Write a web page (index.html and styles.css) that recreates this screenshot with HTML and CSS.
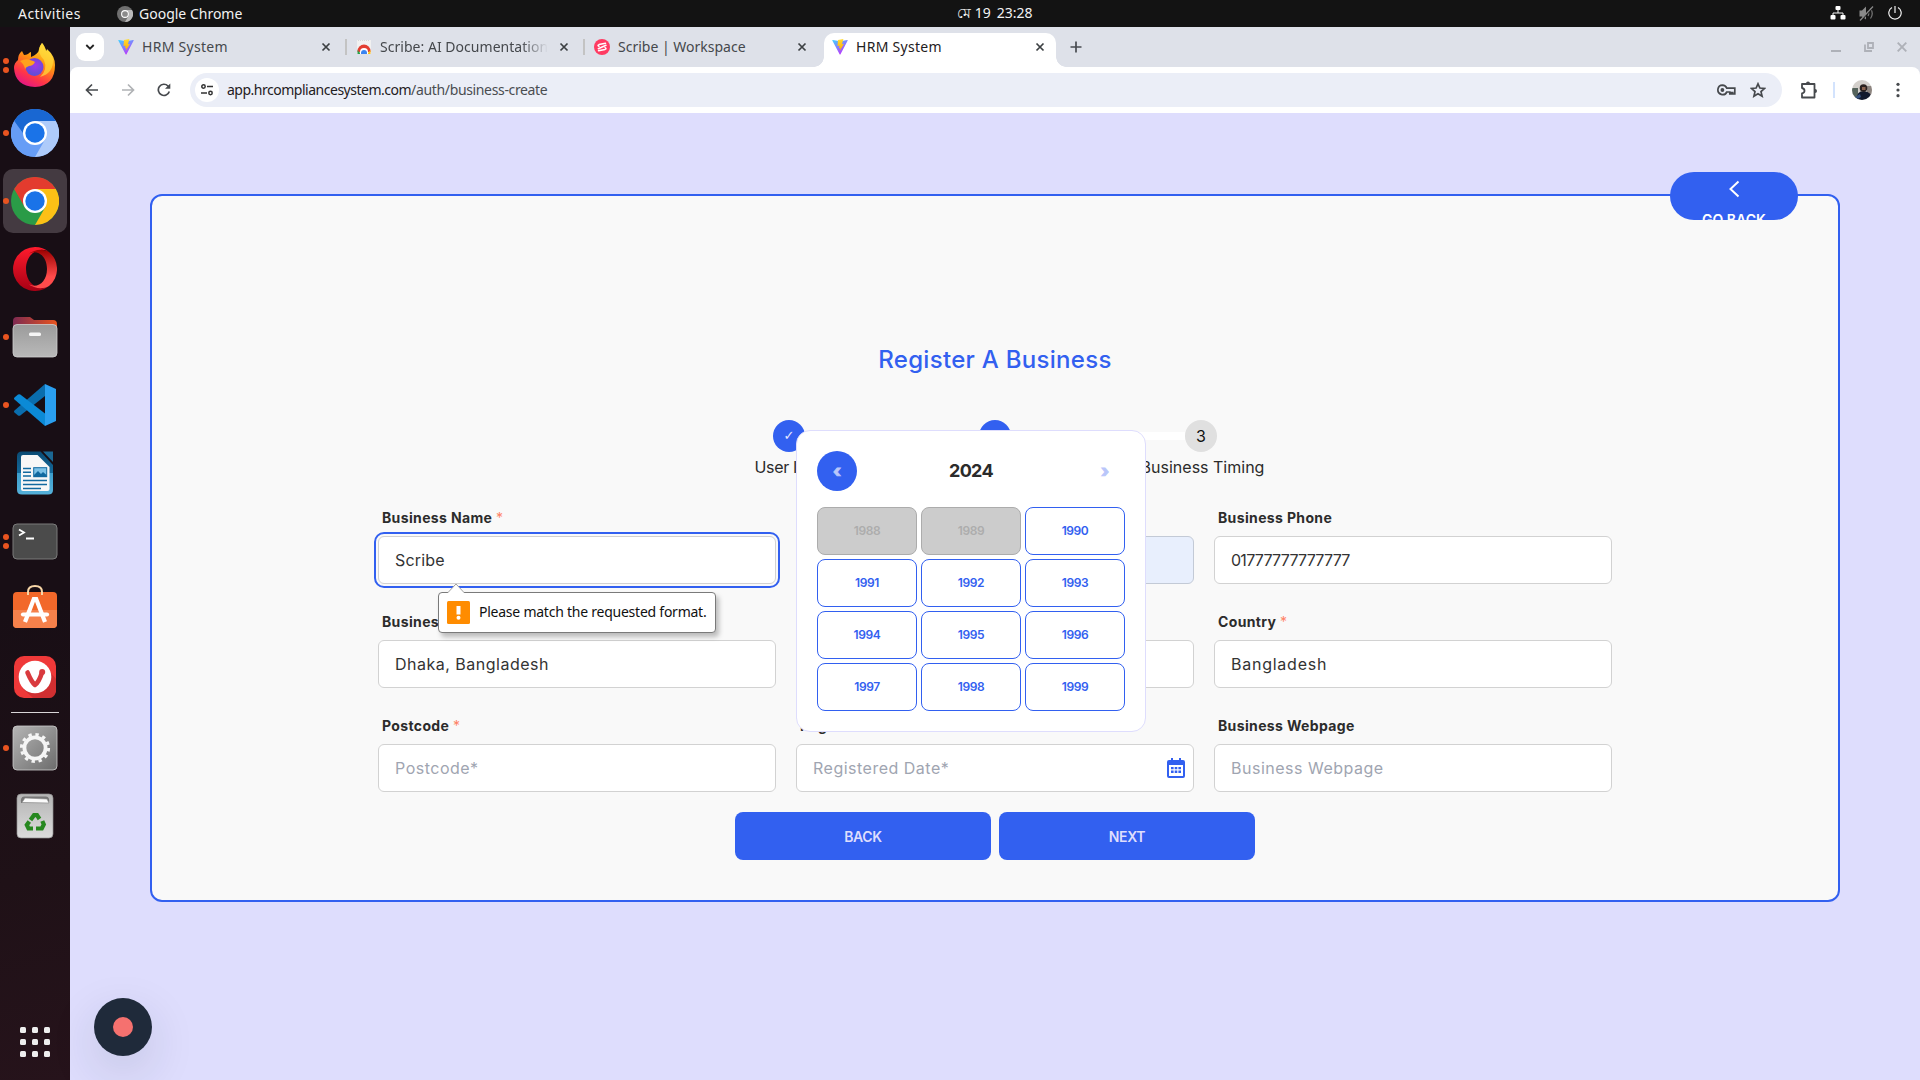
FILE: index.html
```html
<!DOCTYPE html>
<html lang="en">
<head>
<meta charset="utf-8">
<title>HRM System</title>
<link rel="stylesheet" href="styles.css">
</head>
<body>
<svg class="defs" width="0" height="0" aria-hidden="true">
  <defs>
    <linearGradient id="viteA" x1="0" y1="0" x2=".6" y2="1"><stop offset="0" stop-color="#41d1ff"/><stop offset="1" stop-color="#bd34fe"/></linearGradient>
    <linearGradient id="viteB" x1="0" y1="0" x2="0" y2="1"><stop offset="0" stop-color="#ffdd35"/><stop offset="1" stop-color="#ffa800"/></linearGradient>
    <symbol id="vite" viewBox="0 0 16 16"><path d="M.3 1.6 7.6 15.3q.4.7.9 0L15.7 1.6q.2-.6-.5-.5L8 2.3.9 1.1Q.1 1 .3 1.6z" fill="url(#viteA)"/><path d="M11.4 0 6 1.1l-.5 6 2-.3-.5 2.5 1.4-.4-.6 3.1L12 4.8l-2.1.4z" fill="url(#viteB)"/></symbol>
    <symbol id="x" viewBox="0 0 10 10"><path d="M1.500 1.500l7 7M8.500 1.500l-7 7" stroke="currentColor" stroke-width="1.700" fill="none"/></symbol>
    <linearGradient id="ffBody" x1=".8" y1="0" x2=".3" y2="1"><stop offset="0" stop-color="#fff44f"/><stop offset=".4" stop-color="#ff980e"/><stop offset=".75" stop-color="#ff3647"/><stop offset="1" stop-color="#e31587"/></linearGradient>
    <radialGradient id="ffGlobe" cx=".55" cy=".4" r=".6"><stop offset="0" stop-color="#a238e6"/><stop offset="1" stop-color="#5b4fd8"/></radialGradient>
    <linearGradient id="opA" x1="0" y1="0" x2="0" y2="1"><stop offset="0" stop-color="#ff1b2d"/><stop offset="1" stop-color="#a70014"/></linearGradient>
    <linearGradient id="opB" x1="0" y1="0" x2="0" y2="1"><stop offset="0" stop-color="#9c0000"/><stop offset=".7" stop-color="#ff4b4b"/></linearGradient>
    <linearGradient id="fold" x1="0" y1="0" x2="1" y2="0"><stop offset="0" stop-color="#7d2a51"/><stop offset="1" stop-color="#e9541f"/></linearGradient>
    <linearGradient id="gray" x1="0" y1="0" x2="0" y2="1"><stop offset="0" stop-color="#9b9b9b"/><stop offset="1" stop-color="#b9b9b9"/></linearGradient>
    <linearGradient id="set" x1="0" y1="0" x2="1" y2="1"><stop offset="0" stop-color="#b5b5b5"/><stop offset="1" stop-color="#6c6c6c"/></linearGradient>
    <linearGradient id="bin" x1="0" y1="0" x2="0" y2="1"><stop offset="0" stop-color="#b4b4b4"/><stop offset="1" stop-color="#dcdcdc"/></linearGradient>
    <linearGradient id="wr" x1="0" y1="0" x2="0" y2="1"><stop offset="0" stop-color="#0a4a73"/><stop offset=".5" stop-color="#14699b"/><stop offset=".5" stop-color="#3c9dcc"/><stop offset="1" stop-color="#55b1da"/></linearGradient>
  </defs>
</svg>
<div class="desktop">
  <header class="topbar">
    <span class="activities">Activities</span>
    <span class="app-name"><svg width="16" height="16" viewBox="0 0 16 16"><circle cx="8" cy="8" r="8" fill="#6f6f6f"/><path d="M8 16a8 8 0 0 0 7-12H8a4 4 0 0 1 3.500 6z" fill="#b9b9b9"/><circle cx="8" cy="8" r="3.400" fill="#8b8b8b" stroke="#fff" stroke-width="1.100"/></svg>Google Chrome</span>
    <span class="clock"><span>মে 19</span><span>23:28</span></span>
    <span class="tray">
      <svg width="16" height="14" viewBox="0 0 16 14"><path d="M8 3v4M3 10V7h10v3" stroke="#f5f5f5" fill="none"/><rect x="5.500" y="0" width="5" height="4" rx="1" fill="#fff"/><rect x=".5" y="9" width="5" height="4.500" rx="1" fill="#fff"/><rect x="10.500" y="9" width="5" height="4.500" rx="1" fill="#fff"/></svg>
      <svg width="15" height="15" viewBox="0 0 15 15"><path d="M.5 4.500H3l4-4v13L3 10.500H.5z" fill="#8a8a8a"/><path d="M9 5q1.500 2.500 0 5M11.500 2.500q3.500 5 0 10" stroke="#777" stroke-width="1.200" fill="none"/><path d="M1.500 15 14.500 1" stroke="#131313" stroke-width="1.500"/><path d="M1 14.500 14 .5" stroke="#8a8a8a" stroke-width="1.200"/></svg>
      <svg width="14" height="14" viewBox="0 0 14 14"><path d="M4 1.500a6.200 6.200 0 1 0 6 0M7 0v7" stroke="#f0f0f0" stroke-width="1.200" fill="none"/></svg>
    </span>
  </header>
  <div class="workspace">
    <nav class="dock">
      <div class="slot two"><svg width="42" height="44" viewBox="0 0 42 44"><path d="M4 17q0-6 4-9l2 4q2 0 4-1 2-2 3-2v5q7-3 8-7 1-5 3-7 2 2 4 8 1-1 1-2 8 7 8 16 0 21-20 22Q1 43 0 25q0-5 4-8z" fill="url(#ffBody)"/><path d="M28 0q-4 5-3 9 2 5 5 8 4 10-4 17 14-4 13-18Q37 9 33 7l0 3Q31 3 28 0z" fill="#ffd83a" opacity=".75"/><circle cx="20.500" cy="24" r="9" fill="url(#ffGlobe)"/><path d="M6 18q6-3 10-1 4 1 5 2-2 4-6 4-3 1-4 3-1-5-5-8z" fill="#ffa11c"/></svg></div>
      <div class="slot one"><svg width="48" height="48" viewBox="0 0 48 48"><circle cx="24" cy="24" r="24" fill="#669df6"/><path d="M3.200 12A24 24 0 0 1 44.800 12H24L12 24z" fill="#1967d2"/><path d="M3.200 12 13.600 30 24 36 34.400 30 24 48A24 24 0 0 1 3.200 12z" fill="#669df6"/><path d="M24 12H44.800A24 24 0 0 1 24 48L34.400 30z" fill="#aecbfa"/><circle cx="24" cy="24" r="12" fill="#fff"/><circle cx="24" cy="24" r="9.700" fill="#1a73e8"/></svg></div>
      <div class="slot one"><div class="active"><svg width="48" height="48" viewBox="0 0 48 48"><circle cx="24" cy="24" r="24" fill="#2a9b47"/><path d="M3.200 12A24 24 0 0 1 44.800 12H24L13.600 30z" fill="#e33b2e"/><path d="M24 12H44.800A24 24 0 0 1 24 48L34.400 30z" fill="#fcc016"/><circle cx="24" cy="24" r="12" fill="#fff"/><circle cx="24" cy="24" r="9.700" fill="#1a73e8"/></svg></div></div>
      <div class="slot"><svg width="44" height="44" viewBox="0 0 44 44"><path d="M22 0a22 22 0 1 0 14 39c-9 6-23-1-23-17S27-1 36 5A22 22 0 0 0 22 0z" fill="url(#opA)"/><path d="M14 8c9-7 20 0 20 14S23 43 14 36c9 7 17 6 22 3a22 22 0 0 0 0-34c-5-3-13-4-22 3z" fill="url(#opB)"/></svg></div>
      <div class="slot one"><svg width="46" height="42" viewBox="0 0 46 42"><path d="M1 5q0-4 4-4h13l4 3h19q4 0 4 4v20H1z" fill="url(#fold)"/><rect x="1" y="8.500" width="44" height="32.500" rx="4" fill="url(#gray)" stroke="#cfcfcf" stroke-width=".8"/><rect x="17" y="16.500" width="12" height="3.500" rx="1.500" fill="#f5f5f5"/></svg></div>
      <div class="slot one"><svg width="42" height="42" viewBox="0 0 42 42"><path d="M31 0 42 5v32l-11 5z" fill="#2a9ff0"/><path d="M31 0v12L6.300 31.500q-1.200.7-2.300 0L.5 28.500q-1-1 0-2z" fill="#0a6dad"/><path d="M31 42 .5 15.500q-1-1 0-2L4 10.500q1.200-.7 2.300 0L31 29.500z" fill="#0b8ad6"/></svg></div>
      <div class="slot"><svg width="36" height="44" viewBox="0 0 36 44"><path d="M5 .5h18.500L36 14v25q0 4.500-5 4.500H5Q0 43.500 0 39V5Q0 .5 5 .5z" fill="url(#wr)"/><path d="M26 .5h10V11z" fill="#1b6793"/><path d="M6 4h14.500L32.500 16v22q0 2-2 2H6q-2 0-2-2V6q0-2 2-2z" fill="#f7f7f7"/><path d="M6 17.500h8M6 21.300h8M6 25h8M6 29.500h24M6 33.500h24M6 37.500h18" stroke="#11699f" stroke-width="1.600"/><rect x="16.700" y="16.700" width="13" height="9" fill="#7cc1e6" stroke="#11699f"/><path d="M17 26v-2l4-4 3 3 2-2 3.500 3v2z" fill="#11699f"/></svg></div>
      <div class="slot two"><svg width="46" height="37" viewBox="0 0 46 37"><rect x="1" y="1" width="44" height="35" rx="4" fill="#4b4b4b" stroke="#7b7b7b"/><path d="M7 6.500l5 3-5 3M14 15.500h8" stroke="#fff" stroke-width="1.800" fill="none"/></svg></div>
      <div class="slot store"><svg width="46" height="44" viewBox="0 0 46 44"><rect x="1" y="7" width="44" height="36" rx="4" fill="#f2682a"/><path d="M1 25h44v14q0 4-4 4H5q-4 0-4-4z" fill="#f5814b"/><path d="M16 10V7q0-6 7-6t7 6v3" stroke="#f8d6a7" stroke-width="2" fill="none"/><path d="M13 37 21.800 14h2.400L33 37" stroke="#fff" stroke-width="4.200" fill="none"/><path d="M11 29.500h24" stroke="#fff" stroke-width="4.200" stroke-linecap="round"/></svg></div>
      <div class="slot"><svg width="44" height="44" viewBox="0 0 44 44"><rect x="1" y="1" width="42" height="42" rx="10" fill="#ef3939"/><path d="M37 17 43 24v13q-2 6-7 6H20L9 33z" fill="#d02f31"/><circle cx="22" cy="22" r="16.300" fill="#fff"/><path d="M14.500 17.500q4 9.500 7.500 12.500 4-3 7-12.500" stroke="#d93a3e" stroke-width="4.600" stroke-linecap="round" stroke-linejoin="round" fill="none"/><circle cx="29.200" cy="17" r="3" fill="#d93a3e"/></svg></div>
      <div class="rule"></div>
      <div class="slot one"><svg width="46" height="46" viewBox="0 0 46 46"><rect x="1" y="1" width="44" height="44" rx="4" fill="url(#set)" stroke="#cdcdcd" stroke-width=".8"/><circle cx="23" cy="23" r="10.600" fill="none" stroke="#f5f5f5" stroke-width="3.800"/><circle cx="23" cy="23" r="13.600" fill="none" stroke="#f5f5f5" stroke-width="3" stroke-dasharray="3.400 3.720"/></svg></div>
      <div class="slot"><svg width="38" height="46" viewBox="0 0 38 46"><rect x="1" y="1" width="36" height="44" rx="4" fill="url(#bin)" stroke="#8f8f8f" stroke-width=".7"/><path d="M5 10q-1-6 3-6.500h22q4 0 3 6.500z" fill="#777"/><path d="M6 9.500l3-4.500 22 1 2 4z" fill="#fafafa" stroke="#888" stroke-width=".6"/><g fill="none" stroke="#26881f" stroke-width="4.200"><path d="M14.500 27 18 22.200h3l2.500 3.800"/><path d="M26.300 28l1.500 3.500-2 4H20"/><path d="M17 35.500h-4.500l-1.700-3.500 2.500-3.500"/></g></svg></div>
      <div class="apps"><i></i><i></i><i></i><i></i><i></i><i></i><i></i><i></i><i></i></div>
    </nav>
    <div class="browser">
      <div class="tabstrip">
        <button class="tab-search"><svg width="10" height="10" viewBox="0 0 10 10"><path d="M1.300 3l3.700 3.700L8.700 3" stroke="#222" stroke-width="1.800" fill="none"/></svg></button>
        <div class="tab sep"><svg width="16" height="16"><use href="#vite"/></svg><span class="tt">HRM System</span><svg class="close" width="10" height="10"><use href="#x"/></svg></div>
        <div class="tab sep"><svg width="16" height="16" viewBox="0 0 16 16"><rect x="1" y="1" width="14" height="14" fill="#f1f1f1"/><path d="M2 1.500h12" stroke="#d7d7d7" stroke-dasharray="1 1"/><path d="M1.500 12a6.500 6.500 0 0 1 13 0v1h-13z" fill="#e33e30"/><path d="M1.500 11 5 15H1.500z" fill="#2ba24c"/><path d="M14.500 11 11 15h3.500z" fill="#fbc116"/><path d="M4 13a4 4 0 0 1 8 0v2H4z" fill="#fff"/><path d="M5 14a3 3 0 0 1 6 0v1H5z" fill="#3a83f0"/></svg><span class="tt fade">Scribe: AI Documentation</span><svg class="close" width="10" height="10"><use href="#x"/></svg></div>
        <div class="tab"><svg width="16" height="16" viewBox="0 0 16 16"><circle cx="8" cy="8" r="8" fill="#ff3b62"/><path d="M11.500 4.300 5 5.600Q3 6.300 5 7.300M12 6.200 4.300 9.800M11 8.700q2 1 0 1.700l-6.500 1.300" stroke="#fff" stroke-width="1.500" stroke-linecap="round" fill="none"/></svg><span class="tt tight">Scribe | Workspace</span><svg class="close" width="10" height="10"><use href="#x"/></svg></div>
        <div class="tab current"><svg width="16" height="16"><use href="#vite"/></svg><span class="tt">HRM System</span><svg class="close" width="10" height="10"><use href="#x"/></svg></div>
        <svg class="new-tab" width="12" height="12" viewBox="0 0 12 12"><path d="M6 .5v11M.5 6h11" stroke="#484b50" stroke-width="1.700"/></svg>
        <div class="winctl">
          <svg width="10" height="10" viewBox="0 0 10 10"><path d="M0 9h10" stroke="#aeb1b8" stroke-width="2"/></svg>
          <svg width="10" height="10" viewBox="0 0 10 10"><path d="M1 2.500V9h7M4 1h5v5H4z" stroke="#aeb1b8" stroke-width="1.800" fill="none"/></svg>
          <svg width="10" height="10" viewBox="0 0 10 10"><path d="M.7.7l8.600 8.600M9.300.7L.7 9.300" stroke="#aeb1b8" stroke-width="1.900"/></svg>
        </div>
      </div>
      <div class="toolbar">
        <svg width="14" height="14" viewBox="0 0 14 14"><path d="M13 7H2M7 1.500 1.500 7 7 12.500" stroke="#46494d" stroke-width="1.700" fill="none"/></svg>
        <svg width="14" height="14" viewBox="0 0 14 14"><path d="M1 7h11M7 1.500 12.500 7 7 12.500" stroke="#b0b2b5" stroke-width="1.700" fill="none"/></svg>
        <svg width="14" height="14" viewBox="0 0 14 14"><path d="M12.300 8.500A5.600 5.600 0 1 1 11 3l1.500 1.500" stroke="#46494d" stroke-width="1.700" fill="none"/><path d="M13.300.5v5.200H8z" fill="#46494d"/></svg>
        <div class="omnibox">
          <span class="site"><svg width="14" height="12" viewBox="0 0 14 12"><circle cx="3.500" cy="2.500" r="1.700" fill="none" stroke="#333" stroke-width="1.500"/><circle cx="10.500" cy="9" r="1.700" fill="none" stroke="#333" stroke-width="1.500"/><path d="M7 2.500h6M1 9h6" stroke="#333" stroke-width="1.600"/></svg></span>
          <span class="url"><span class="host">app.hrcompliancesystem.com</span><span class="path">/auth/business-create</span></span>
          <svg class="key" width="19" height="12" viewBox="0 0 19 12"><path d="M5.500 1.200a4.700 4.700 0 1 0 4.300 6.800h3v2h1.500V8.500h1.500V10h2V4.200H9.800A4.800 4.800 0 0 0 5.500 1.200z" fill="none" stroke="#46494d" stroke-width="1.700"/><circle cx="5.400" cy="6" r="1.900" fill="#46494d"/></svg>
          <svg class="star" width="16" height="16" viewBox="0 0 16 16"><path d="M8 1.800 9.900 6l4.600.4-3.500 3.200 1.100 4.600L8 11.800l-4.100 2.400L5 9.600 1.500 6.400 6.100 6z" fill="none" stroke="#46494d" stroke-width="1.700"/></svg>
        </div>
        <svg class="ext" width="18" height="18" viewBox="0 0 18 18"><path d="M2 3h12.500v13.500H2v-4q2.500-.5 2.500-2.700T2 7z" fill="none" stroke="#46494d" stroke-width="1.800" stroke-linejoin="round"/><path d="M6 2.500a2 2 0 0 1 4 0zM15 8a2 2 0 0 1 0 4z" fill="#46494d"/></svg>
        <span class="bar"></span>
        <svg class="avatar" width="20" height="20" viewBox="0 0 20 20"><clipPath id="av"><circle cx="10" cy="10" r="10"/></clipPath><g clip-path="url(#av)"><rect width="20" height="20" fill="#d3cfcb"/><path d="M0 8h6v12H0z" fill="#55635c"/><path d="M15 6h5v9h-5z" fill="#8d8580"/><path d="M5 20q-1-9 7-9 8 1 8 9z" fill="#121a2e"/><circle cx="11.500" cy="8" r="3.800" fill="#2b211f"/><path d="M10 7h3.500v3H10z" fill="#8a6350"/><path d="M3 17l5-3 1 3-5 3z" fill="#35507e"/></g></svg>
        <svg width="4" height="16" viewBox="0 0 4 16"><g fill="#46494d"><circle cx="2" cy="2.300" r="1.600"/><circle cx="2" cy="8" r="1.600"/><circle cx="2" cy="13.700" r="1.600"/></g></svg>
      </div>
      <main class="page">
        <section class="card">
          <button class="go-back"><svg width="12" height="18" viewBox="0 0 12 18"><path d="M10.500 1.500 2.500 9l8 7.500" stroke="#fff" stroke-width="2" fill="none"/></svg><span>GO BACK</span></button>
          <h1>Register A Business</h1>
          <ol class="steps">
            <li class="done"><b class="tick">✓</b><span class="first">User Info</span></li>
            <li class="done"><b>2</b><span>Business Info</span></li>
            <li><b>3</b><span class="last">Business Timing</span></li>
          </ol>
          <form class="fields">
            <div class="field"><label>Business Name <em>*</em></label><input class="focused" value="Scribe">
              <div class="bubble"><svg class="tip" width="18" height="10" viewBox="0 0 18 10"><path d="M1 9.500 9 1l8 8.500" fill="#fff" stroke="#a0a0a0"/><path d="M1.500 9.500h15" stroke="#fff"/></svg><svg width="23" height="23" viewBox="0 0 23 23"><rect width="23" height="23" rx="1.500" fill="#ff8c00"/><path d="M9.500 5h4v8.500h-4z" fill="#fff"/><circle cx="11.500" cy="16.700" r="2" fill="#fff"/></svg><span>Please match the requested format.</span></div>
            </div>
            <div class="field"><label>Business Email <em>*</em></label><input class="autofill" value="">
              <div class="picker">
                <div class="picker-head"><button class="prev">‹</button><strong>2024</strong><button class="next">›</button></div>
                <div class="years">
                  <button class="off">1988</button><button class="off">1989</button><button>1990</button>
                  <button>1991</button><button>1992</button><button>1993</button>
                  <button>1994</button><button>1995</button><button>1996</button>
                  <button>1997</button><button>1998</button><button>1999</button>
                </div>
              </div>
            </div>
            <div class="field"><label>Business Phone</label><input class="num" value="01777777777777"></div>
            <div class="field"><label>Business Address <em>*</em></label><input value="Dhaka, Bangladesh"></div>
            <div class="field"><label>City <em>*</em></label><input value=""></div>
            <div class="field"><label>Country <em>*</em></label><input class="wide" value="Bangladesh"></div>
            <div class="field"><label>Postcode <em>*</em></label><input placeholder="Postcode*"></div>
            <div class="field"><label>Registered Date <em>*</em></label><input placeholder="Registered Date*">
              <svg class="cal" width="18" height="20" viewBox="0 0 18 20"><path d="M4 0h2v4H4zM12 0h2v4h-2z" fill="#3260f0"/><path d="M2 2h14q2 0 2 2v14q0 2-2 2H2q-2 0-2-2V4q0-2 2-2zm0 5v11h14V7z" fill="#3260f0" fill-rule="evenodd"/><path d="M4 9h2.600v2.300H4zM7.700 9h2.600v2.300H7.700zM11.400 9H14v2.300h-2.600zM4 12.600h2.600v2.300H4zM7.700 12.600h2.600v2.300H7.700zM11.400 12.600H14v2.300h-2.600z" fill="#3260f0"/></svg>
            </div>
            <div class="field"><label>Business Webpage</label><input placeholder="Business Webpage"></div>
          </form>
          <div class="actions"><button>BACK</button><button>NEXT</button></div>
        </section>
        <button class="record"><i></i></button>
      </main>
    </div>
  </div>
</div>
</body>
</html>
```
FILE: styles.css
```css
* { box-sizing: border-box; }
body { margin: 0; width: 1920px; height: 1080px; overflow: hidden; font-family: Inter, "Open Sans", sans-serif; color: #2b2b2b; }
button { border: 0; padding: 0; margin: 0; font: inherit; background: none; }
svg { display: block; flex: none; }
.defs { position: absolute; }
.desktop { height: 1080px; display: flex; flex-direction: column; }

.topbar { height: 27px; background: #131313; color: #f2f2f2; display: flex; align-items: center; padding: 0 18px; position: relative; font: 14px/27px "Noto Sans", sans-serif; }
.activities { letter-spacing: .45px; width: 99px; }
.app-name { display: flex; align-items: center; gap: 6px; }
.clock { position: absolute; left: 957px; top: -1px; display: flex; gap: 6px; }
.clock span { white-space: nowrap; }
.tray { margin-left: auto; display: flex; align-items: center; gap: 14px; padding-bottom: 1px; }
.tray svg:first-child { margin-right: -1px; }

.workspace { flex: 1; display: flex; min-height: 0; }
.dock { width: 70px; background: linear-gradient(165deg, #180e15 55%, #1f1117 80%, #26131b); display: flex; flex-direction: column; align-items: center; padding: 4px 0 23px; }
.slot { height: 68px; width: 70px; display: flex; align-items: center; justify-content: center; position: relative; flex: none; }
.slot.one::before, .slot.two::before, .slot.two::after { content: ""; position: absolute; left: 3px; top: 31px; width: 6px; height: 6px; border-radius: 50%; background: #e95420; }
.slot.two::before { top: 27px; }
.slot.two::after { top: 36px; }
.slot.store { padding-bottom: 5px; }
.active { width: 64px; height: 64px; border-radius: 10px; background: #443a41; display: grid; place-items: center; }
.rule { width: 48px; height: 1px; background: #d8d5d7; margin: 1px 0; flex: none; }
.apps { margin-top: auto; display: grid; grid-template-columns: repeat(3, 6px); gap: 6px; }
.apps i { width: 6px; height: 6px; border-radius: 1.500px; background: #eee; }

.browser { flex: 1; display: flex; flex-direction: column; background: #dee1e9; min-width: 0; }
.tabstrip { height: 40px; display: flex; align-items: center; padding: 0 13px 0 6px; font: 14px/20px "Noto Sans", sans-serif; letter-spacing: .28px; color: #45484c; }
.tab-search { width: 28px; height: 28px; border-radius: 9px; background: #fff; display: grid; place-items: center; margin-right: 6px; }
.tab { width: 238px; height: 34px; margin-top: 6px; padding: 0 17px 6px 8px; display: flex; align-items: center; position: relative; }
.tab.sep::after { content: ""; position: absolute; left: 235px; top: 6px; width: 2px; height: 16px; background: #c3c3c3; }
.tt { margin-left: 8px; flex: 1; white-space: nowrap; overflow: hidden; padding-bottom: 1px; }
.tt.tight { letter-spacing: 0; }
.tt.fade { margin-right: 11px; letter-spacing: .03px; -webkit-mask-image: linear-gradient(90deg, #000 84%, transparent); mask-image: linear-gradient(90deg, #000 84%, transparent); }
.close { color: #3c4043; }
.tab.current { width: 232px; padding-right: 11px; background: #fff; border-radius: 10px 10px 0 0; color: #1f2022; }
.tab.current::before, .tab.current::after { content: ""; position: absolute; bottom: 0; width: 10px; height: 10px; }
.tab.current::before { left: -10px; background: radial-gradient(circle at 0 0, transparent 9.500px, #fff 10px); }
.tab.current::after { right: -10px; background: radial-gradient(circle at 100% 0, transparent 9.500px, #fff 10px); }
.new-tab { margin-left: 14px; }
.winctl { margin-left: auto; display: flex; gap: 23px; }
.toolbar { height: 46px; background: #fff; border-radius: 8px 8px 0 0; display: flex; align-items: center; padding: 0 20px 0 15px; }
.toolbar > svg:nth-child(2), .toolbar > svg:nth-child(3) { margin-left: 22px; }
.omnibox { width: 1592px; height: 34px; margin-left: 19px; border-radius: 17px; background: #ebeef7; display: flex; align-items: center; padding: 0 16px 0 5px; font: 14px/20px "Noto Sans", sans-serif; }
.site { width: 24px; height: 24px; border-radius: 50%; background: #fff; display: grid; place-items: center; }
.url { margin-left: 8px; flex: 1; padding-bottom: 1px; }
.host { color: #1f2022; letter-spacing: -.49px; }
.path { color: #4a4d51; letter-spacing: -.35px; }
.star { margin-left: 14px; }
.ext { margin-left: 18px; }
.bar { width: 2px; height: 16px; background: #d3e3fd; margin-left: 15px; }
.avatar { margin: 0 24px 0 17px; }

.page { flex: 1; background: #deddfd; padding: 81px 80px 0; position: relative; min-height: 0; }
.card { width: 1690px; height: 708px; border: 2px solid #3260f0; border-radius: 12px; background: #f9f9f9; padding-top: 144px; position: relative; display: flex; flex-direction: column; align-items: center; }
.go-back { position: absolute; right: 40px; top: -24px; width: 128px; height: 48px; border-radius: 24px; background: #3260f0; color: #fff; display: flex; flex-direction: column; align-items: center; padding-top: 8px; font: 600 14px/20px Inter, sans-serif; overflow: hidden; }
.go-back svg { margin-bottom: 12px; flex: none; }
.go-back span { flex: none; }
h1 { margin: 0; color: #3260f0; font: 500 24px/40px Inter, sans-serif; letter-spacing: .29px; }
.steps { list-style: none; margin: 40px 0 0; padding: 0; display: grid; grid-template-columns: repeat(3, 206px); line-height: 16px; }
.steps li { display: flex; flex-direction: column; align-items: center; position: relative; }
.steps li + li::before { content: ""; position: absolute; width: 174px; height: 8px; top: 12px; right: 119px; background: #fff; }
.steps b { width: 32px; height: 32px; border-radius: 50%; background: #e0e0e0; color: #111; font-weight: 400; font-size: 16px; display: grid; place-items: center; }
.steps .done b { background: #3260f0; color: #e7e7fd; }
.steps .tick { font-family: "DejaVu Sans", sans-serif; font-size: 13px; }
.steps span { margin-top: 7px; white-space: nowrap; }
.steps .first { width: 69px; letter-spacing: -.35px; }
.steps .last { padding-left: 3px; }
.fields { width: 1234px; display: grid; grid-template-columns: repeat(3, 398px); column-gap: 20px; row-gap: 20px; margin-top: 25px; }
.field { position: relative; }
.field label { display: block; height: 36px; padding: 9px 0 0 4px; font: 700 14px/18px Inter, sans-serif; letter-spacing: .36px; color: #2c2c2c; }
.field em { font-style: normal; font-weight: 400; color: #ff8266; }
.field input { display: block; width: 398px; height: 48px; border: 1px solid #d2d2d2; border-radius: 6px; background: #fff; padding: 0 16px; font: 16px Inter, sans-serif; letter-spacing: .5px; color: #333; }
.field input.num { letter-spacing: -.72px; }
.field input.wide { letter-spacing: .75px; }
.field input::placeholder { color: #9fa5b1; }
.field input.focused { outline: 2px solid #3260f0; outline-offset: 2px; letter-spacing: .2px; }
.field input.autofill { background: #e8effd; border-color: #c3cad6; }
.cal { position: absolute; right: 9px; bottom: 14px; }
.bubble { position: absolute; z-index: 3; left: 60px; top: 92px; width: 278px; height: 41px; border: 1px solid #7a7a7a; border-radius: 4px; background: #fff; display: flex; align-items: center; padding-left: 8px; gap: 9px; box-shadow: 3px 4px 5px rgba(0,0,0,.25); color: #111; font: 14px/20px "Noto Sans", sans-serif; letter-spacing: -.24px; white-space: nowrap; }
.bubble span { padding-bottom: 1px; }
.bubble .tip { position: absolute; left: 8px; top: -10px; }
.picker { position: absolute; z-index: 2; left: 0; top: -70px; width: 350px; height: 302px; padding: 20px; border: 1px solid #deddfd; border-radius: 14px; background: #fff; }
.picker-head { display: flex; align-items: center; justify-content: space-between; margin-bottom: 16px; }
.picker-head strong { font: 700 18px/24px Inter, sans-serif; letter-spacing: -.7px; }
.picker-head button { width: 40px; height: 40px; border-radius: 50%; font: 900 17px/37px Inter, sans-serif; -webkit-text-stroke: .8px currentColor; }
.prev { background: #3260f0; color: #b9c6fa; }
.next { color: #b9c6fa; }
.years { display: grid; grid-template-columns: repeat(3, 100px); grid-auto-rows: 48px; gap: 4px; }
.years button { border: 1px solid #3260f0; border-radius: 8px; color: #3260f0; background: #fff; font: 600 12px Inter, sans-serif; letter-spacing: -.4px; padding-bottom: 1px; }
.years .off { background: #ccc; border-color: #acacac; color: #adadad; }
.actions { display: flex; gap: 8px; margin-top: 20px; }
.actions button { width: 256px; height: 48px; border-radius: 8px; background: #3260f0; color: #deddfd; font: 600 14px Inter, sans-serif; letter-spacing: -.4px; }
.record { position: absolute; left: 24px; top: 885px; width: 58px; height: 58px; border-radius: 50%; background: #1f2a3a; display: grid; place-items: center; box-shadow: 0 16px 48px rgba(31,42,58,.14); }
.record i { width: 20px; height: 20px; border-radius: 50%; background: #f5716f; }
```
